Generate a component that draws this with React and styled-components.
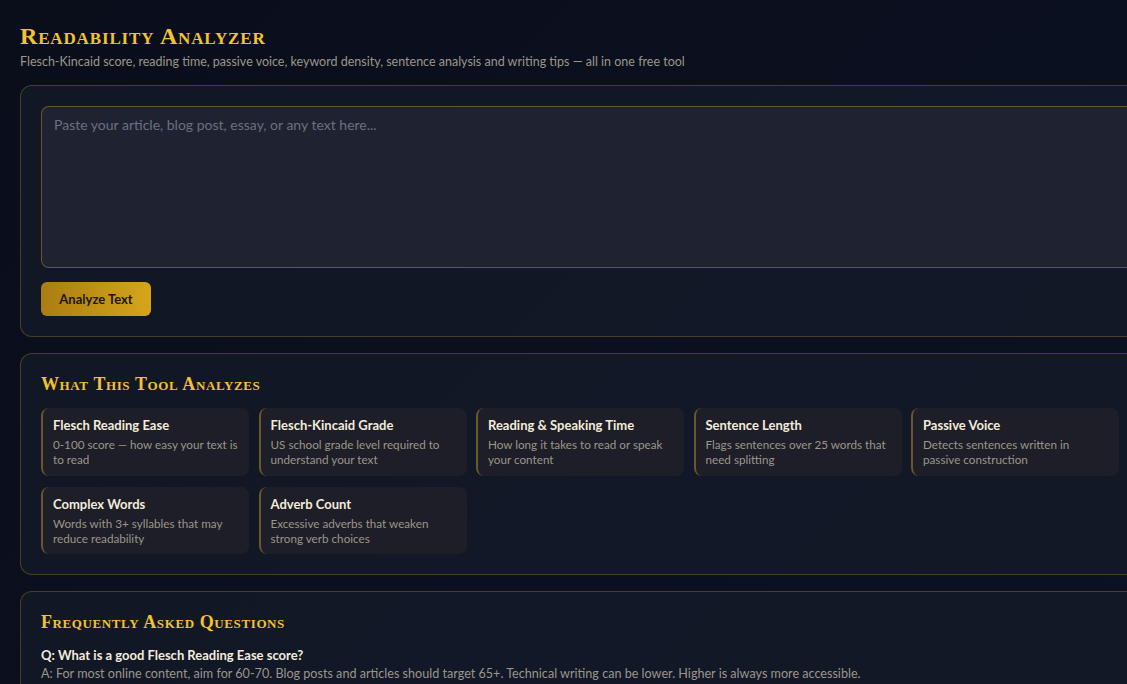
import React from 'react';
import styled, { createGlobalStyle } from 'styled-components';

const gold = '#f2c230';
const cream = '#f3ecdc';
const muted = '#9c968a';

const GlobalStyle = createGlobalStyle`
    html, body {
        margin: 0;
        padding: 0;
        overflow: hidden;
    }
    body {
        background: linear-gradient(135deg, #0a0e1b 0%, #0b1020 60%, #0d1222 100%);
        font-family: Lato, "Open Sans", sans-serif;
        color: ${cream};
        min-height: 684px;
    }
`;

const features = [
    ['Flesch Reading Ease', '0-100 score — how easy your text is to read'],
    ['Flesch-Kincaid Grade', 'US school grade level required to understand your text'],
    ['Reading & Speaking Time', 'How long it takes to read or speak your content'],
    ['Sentence Length', 'Flags sentences over 25 words that need splitting'],
    ['Passive Voice', 'Detects sentences written in passive construction'],
    ['Complex Words', 'Words with 3+ syllables that may reduce readability'],
    ['Adverb Count', 'Excessive adverbs that weaken strong verb choices'],
];

export default function App() {
    return (
        <>
            <GlobalStyle />
            <Page>
                <Header>
                    <Title>Readability Analyzer</Title>
                    <Subtitle>
                        Flesch-Kincaid score, reading time, passive voice, keyword density, sentence analysis and writing tips — all in one free tool
                    </Subtitle>
                </Header>

                <Panel>
                    <TextInput placeholder="Paste your article, blog post, essay, or any text here..." />
                    <AnalyzeButton>Analyze Text</AnalyzeButton>
                </Panel>

                <Panel>
                    <SectionTitle>What This Tool Analyzes</SectionTitle>
                    <FeatureGrid>
                        {features.map(([name, desc]) => (
                            <FeatureCard key={name}>
                                <FeatureName>{name}</FeatureName>
                                <FeatureDesc>{desc}</FeatureDesc>
                            </FeatureCard>
                        ))}
                    </FeatureGrid>
                </Panel>

                <Panel>
                    <SectionTitle>Frequently Asked Questions</SectionTitle>
                    <Question>Q: What is a good Flesch Reading Ease score?</Question>
                    <Answer>
                        A: For most online content, aim for 60-70. Blog posts and articles should target 65+. Technical writing can be lower. Higher is always more accessible.
                    </Answer>
                </Panel>
            </Page>
        </>
    );
}

const Page = styled.div`
    width: 1160px;
    padding: 19px 0 40px 20px;
    display: flex;
    flex-direction: column;
    gap: 16px;
`;

const Header = styled.header`
    display: flex;
    flex-direction: column;
    margin-bottom: -1px;
`;

const Title = styled.h1`
    margin: 2px 0 0;
    font-family: "Liberation Serif", "DejaVu Serif", serif;
    font-variant: small-caps;
    font-weight: bold;
    font-size: 24px;
    line-height: 30px;
    letter-spacing: 0.85px;
    color: ${gold};
`;

const Subtitle = styled.p`
    margin: 3px 0 0;
    font-size: 12.5px;
    line-height: 16px;
    color: ${muted};
`;

const Panel = styled.section`
    box-sizing: border-box;
    width: 1160px;
    padding: 20px;
    background: rgba(22, 27, 42, 0.75);
    border: 1px solid rgba(190, 150, 50, 0.32);
    border-radius: 12px;
    display: flex;
    flex-direction: column;
    align-items: flex-start;
`;

const TextInput = styled.textarea`
    box-sizing: border-box;
    width: 100%;
    height: 162px;
    padding: 8px 12px;
    resize: none;
    background: #1f2231;
    border: 1px solid rgba(200, 160, 50, 0.42);
    border-radius: 8px;
    color: ${cream};
    font-family: Lato, sans-serif;
    font-size: 14px;
    line-height: 20px;
    outline: none;

    &::placeholder {
        color: #6c7081;
    }
`;

const AnalyzeButton = styled.button`
    margin-top: 14px;
    width: 110px;
    height: 34px;
    border: none;
    border-radius: 6px;
    background: linear-gradient(90deg, #a97d13 0%, #d6a41b 100%);
    color: #1c1608;
    font-family: Lato, sans-serif;
    font-weight: bold;
    font-size: 13px;
    cursor: pointer;
`;

const SectionTitle = styled.h2`
    margin: 0 0 14px;
    font-family: "Liberation Serif", "DejaVu Serif", serif;
    font-variant: small-caps;
    font-weight: bold;
    font-size: 18px;
    line-height: 20px;
    letter-spacing: 0.6px;
    color: ${gold};
`;

const FeatureGrid = styled.div`
    width: 1078px;
    display: grid;
    grid-template-columns: repeat(5, 1fr);
    column-gap: 9.5px;
    row-gap: 11px;
`;

const FeatureCard = styled.div`
    box-sizing: border-box;
    height: 67.5px;
    padding: 8px 10px 0 10px;
    background: #1d1e27;
    border-left: 2px solid rgba(170, 135, 45, 0.55);
    border-radius: 8px;
`;

const FeatureName = styled.div`
    font-size: 13px;
    font-weight: bold;
    line-height: 18px;
    color: ${cream};
`;

const FeatureDesc = styled.div`
    margin-top: 3px;
    font-size: 11.7px;
    line-height: 15px;
    color: ${muted};
`;

const Question = styled.div`
    margin-top: 0;
    font-size: 13px;
    font-weight: bold;
    line-height: 18px;
    color: ${cream};
`;

const Answer = styled.div`
    margin-top: 1px;
    font-size: 12.6px;
    line-height: 18px;
    color: ${muted};
`;
